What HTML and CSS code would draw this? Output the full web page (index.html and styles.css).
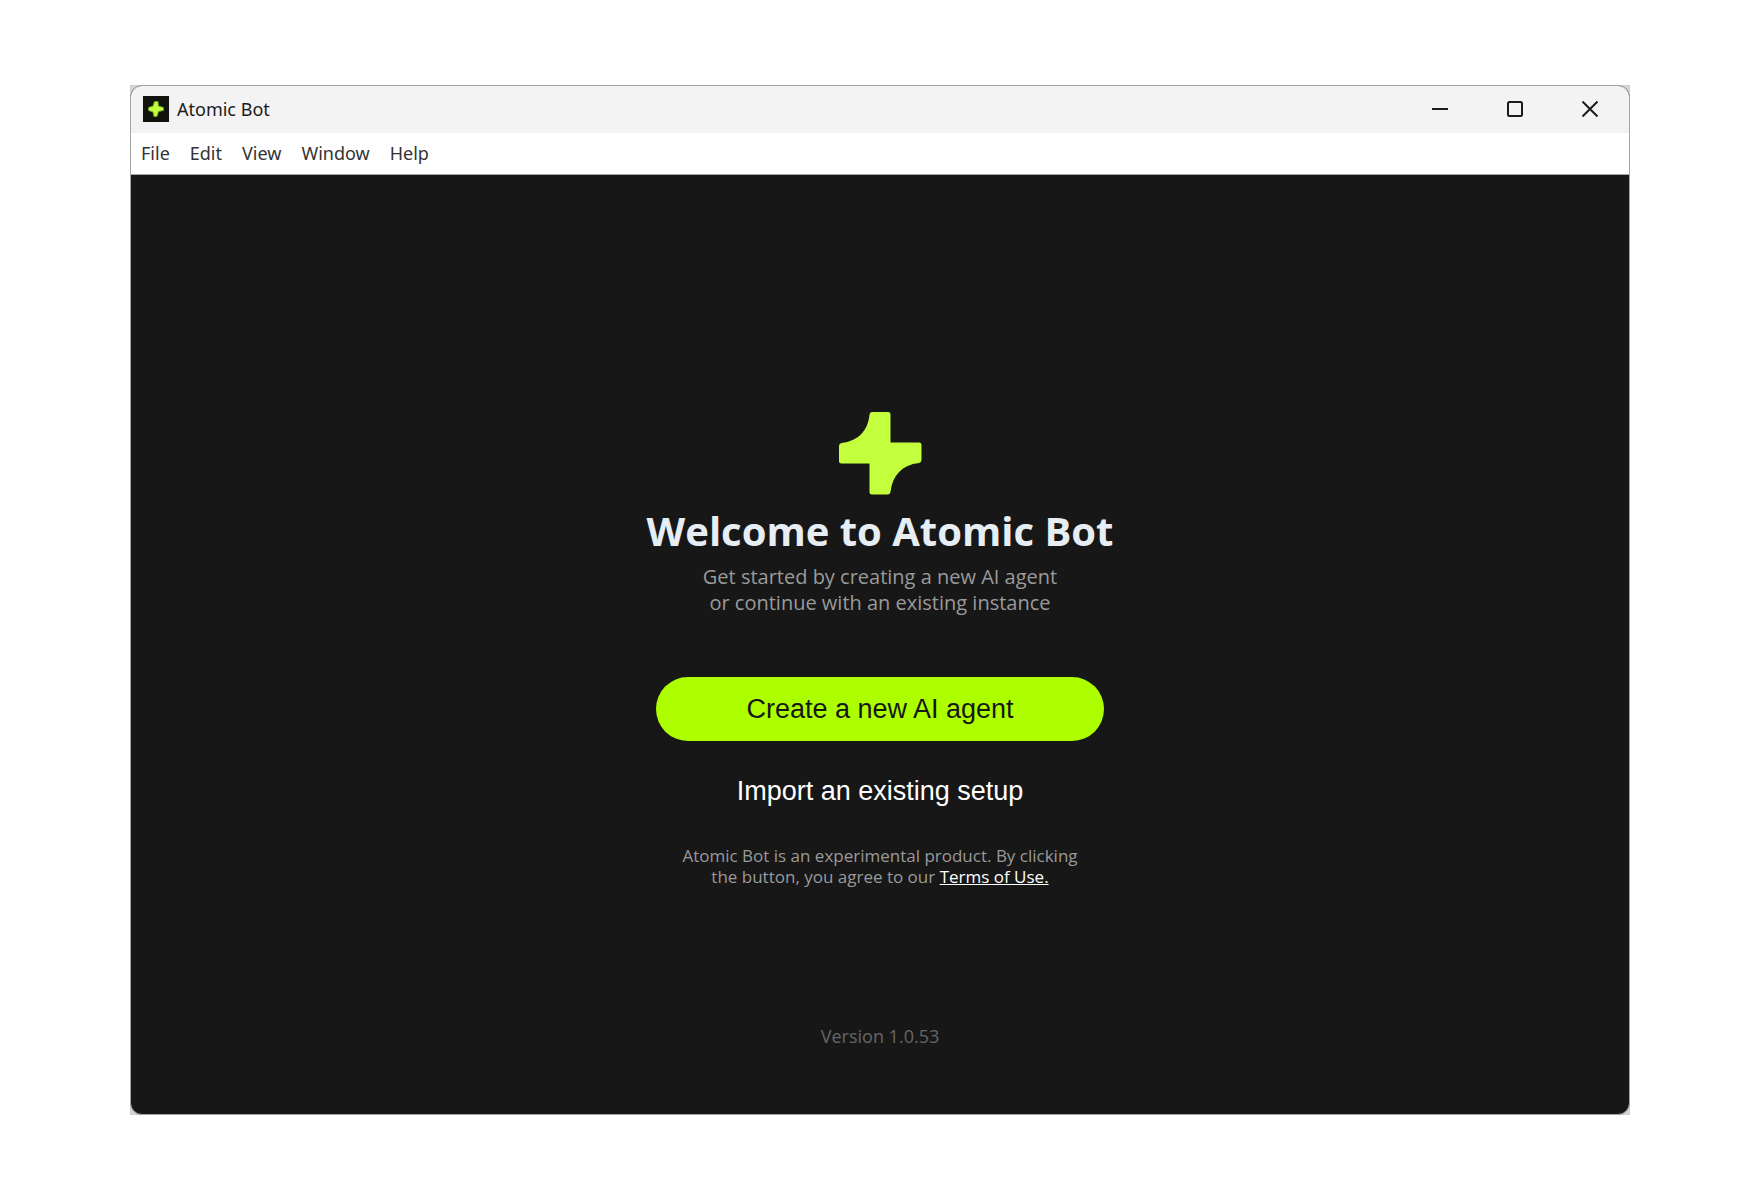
FILE: index.html
```html
<!DOCTYPE html>
<html lang="en">
  <head>
    <meta charset="UTF-8" />
    <meta name="viewport" content="width=device-width, initial-scale=1.0" />
    <title>Atomic Bot</title>
    <link rel="stylesheet" href="styles.css">
  </head>
  <body>
    <div class="backdrop">
      <div class="window">
        <header class="titlebar">
          <svg class="app-icon" viewBox="0 0 26 26" aria-hidden="true">
            <rect width="26" height="26" fill="#10140c" />
            <path d="M11.500 5.500h3.500l.5 4.500 5 1.500v3l-5 1-1.500 5h-3l-1-4.500-4.500-1.500v-3l4.500-1.500z" fill="#c3ff3d" stroke="#6d9a25" stroke-linejoin="round" />
          </svg>
          <span class="app-name">Atomic Bot</span>
          <div class="window-controls">
            <button type="button" aria-label="Minimize">
              <svg viewBox="0 0 16 16"><path d="M0 8h16" /></svg>
            </button>
            <button type="button" aria-label="Maximize">
              <svg viewBox="0 0 16 16"><rect x="1" y="1" width="14" height="14" rx="1.500" /></svg>
            </button>
            <button type="button" aria-label="Close">
              <svg viewBox="0 0 16 16"><path d="M.5.5l15 15M15.500.5l-15 15" /></svg>
            </button>
          </div>
        </header>

        <nav class="menubar">
          <button type="button">File</button>
          <button type="button">Edit</button>
          <button type="button">View</button>
          <button type="button">Window</button>
          <button type="button">Help</button>
        </nav>

        <main class="content">
          <svg class="logo" viewBox="0 0 84 84" aria-hidden="true">
            <path d="M34 1h16q2.500 0 2.500 2.500V31.500H81q2.500 0 2.500 2.500v15q0 2.500-2.500 3C64 54 54.500 64 52.500 81q-.5 2.500-3 2.500H34q-2.500 0-2.500-2.500V52.500H3.500Q1 52.500 1 50V35q0-2.500 2.500-3C20 30 30 20 31.500 3.500Q31.800 1 34 1z" fill="#c3ff3d" />
          </svg>
          <h1>Welcome to Atomic Bot</h1>
          <p class="subtitle">
            Get started by creating a new AI agent<br>
            or continue with an existing instance
          </p>
          <div class="actions">
            <button type="button" class="btn btn-primary">Create a new AI agent</button>
            <button type="button" class="btn btn-ghost">Import an existing setup</button>
          </div>
          <p class="terms">
            Atomic Bot is an experimental product. By clicking<br>
            the button, you agree to our <a href="#terms">Terms of Use.</a>
          </p>
          <p class="version">Version 1.0.53</p>
        </main>
      </div>
    </div>
  </body>
</html>
```

FILE: styles.css
```css
* {
  box-sizing: border-box;
}

body {
  margin: 0;
  padding: 85px 130px;
  min-height: 100vh;
  display: flex;
  background: #fff;
  font-family: 'Open Sans', 'Noto Sans', sans-serif;
}

h1,
p {
  margin: 0;
}

button {
  border: none;
  background: none;
  cursor: pointer;
}

.backdrop {
  flex: 1;
  display: flex;
  background: #d2d2ce;
}

.window {
  flex: 1;
  display: flex;
  flex-direction: column;
  border: 1px solid #a5a5a5;
  border-radius: 12px;
  overflow: hidden;
  background: #171717;
}

/* title bar */
.titlebar,
.menubar {
  font-family: 'Noto Sans', 'Open Sans', sans-serif;
  font-size: 18px;
}

.titlebar {
  display: flex;
  align-items: center;
  height: 47px;
  padding: 0 2px 1px 12px;
  background: #f3f3f3;
}

.app-icon {
  width: 26px;
  height: 26px;
}

.app-name {
  margin-left: 8px;
  color: #1b1b1b;
}

.window-controls {
  display: flex;
  align-self: stretch;
  margin-left: auto;
}

.window-controls button {
  display: flex;
  align-items: center;
  justify-content: center;
  width: 75px;
  padding: 0;
}

.window-controls svg {
  width: 16px;
  height: 16px;
  fill: none;
  stroke: #1b1b1b;
  stroke-width: 2;
}

/* menu */
.menubar {
  display: flex;
  height: 42px;
  background: #fff;
  border-bottom: 1px solid #a5a5a5;
}

.menubar button {
  padding: 0 10px 2px;
  font: inherit;
  color: #333;
}

/* welcome screen */
.content {
  flex: 1;
  display: flex;
  flex-direction: column;
  align-items: center;
  padding: 236px 24px 65px;
  text-align: center;
  color: #9a9a9a;
}

.logo {
  width: 84px;
  height: 84px;
}

h1 {
  margin-top: 8px;
  font-size: 40px;
  line-height: 56px;
  color: #e6edf3;
}

.subtitle {
  margin-top: 5px;
  font-size: 20px;
  line-height: 26px;
}

.actions {
  display: flex;
  flex-direction: column;
  gap: 18px;
  width: 448px;
  max-width: 100%;
  margin-top: 61px;
}

.btn {
  height: 64px;
  border-radius: 32px;
  font-family: 'Liberation Sans', Arial, sans-serif;
  font-size: 27px;
}

.btn-primary {
  background: #adff00;
  color: #171717;
}

.btn-ghost {
  color: #fff;
}

.terms {
  margin-top: 22px;
  font-size: 17px;
  line-height: 21px;
}

.terms a {
  color: #fff;
}

.version {
  margin-top: auto;
  font-size: 18px;
  line-height: 26px;
  color: #666;
}
```
